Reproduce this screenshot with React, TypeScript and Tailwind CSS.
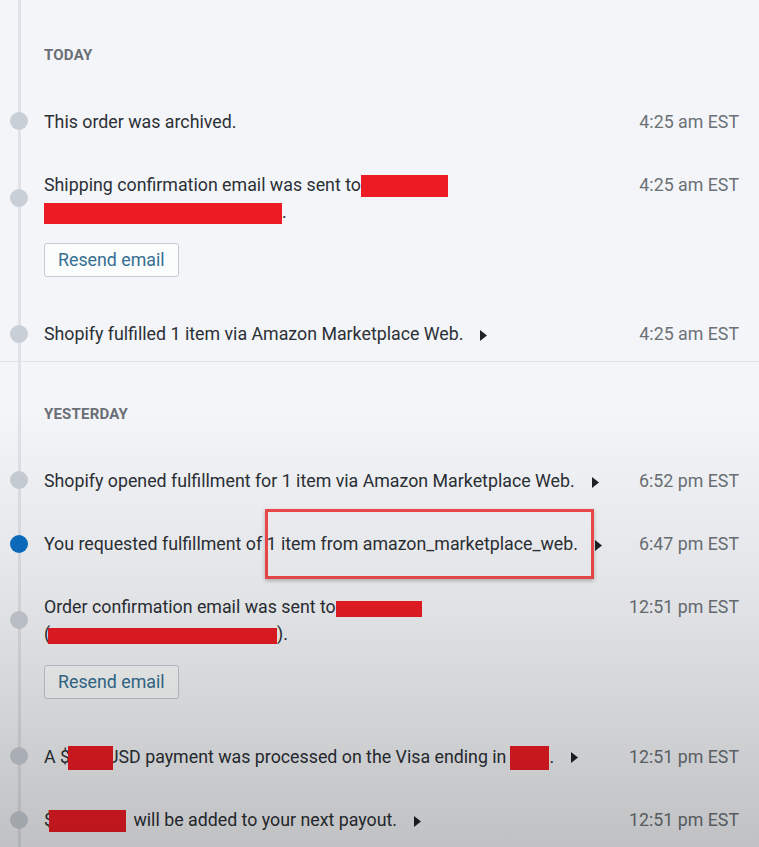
import React from "react";

type Redact = { w: number; h: number; className?: string };

const Box = ({ w, h, className = "" }: Redact) => (
  <span
    className={`relative z-[1] inline-block bg-[#ed1c24] align-middle ${className}`}
    style={{ width: w, height: h }}
  />
);

const Arrow = () => (
  <svg
    width="7"
    height="11"
    viewBox="0 0 7 11"
    className="ml-[17px] inline-block align-middle"
  >
    <path d="M0 0 L7 5.5 L0 11 Z" fill="#1d2228" />
  </svg>
);

interface EventProps {
  time: string;
  blue?: boolean;
  children: React.ReactNode;
  action?: boolean;
  last?: boolean;
}

const Event: React.FC<EventProps> = ({ time, blue, children, action, last }) => (
  <li className={`pt-[17.75px] ${last ? "pb-[13.75px]" : "pb-[18.5px]"}`}>
    <div className="flex">
      <div className="relative z-10 flex w-[44px] shrink-0 items-center">
        <span
          className={`ml-[10px] h-[18px] w-[18px] rounded-full ${
            blue ? "bg-[#0b6fc2]" : "bg-[#c9cfd6]"
          }`}
        />
      </div>
      <div className="flex-1 pr-4 text-[17.8px] leading-[27px] text-[#2b3036]">
        {children}
      </div>
      <div className="shrink-0 text-[17.8px] leading-[27px] text-[#6b7177]">
        {time}
      </div>
    </div>
    {action && (
      <div className="mb-[7px] mt-[18px] pl-[44px]">
        <button className="h-[34px] rounded-[3px] border border-[#c4cbd3] bg-[#fbfcfc] px-[13px] text-[17.8px] text-[#356f93]">
          Resend email
        </button>
      </div>
    )}
  </li>
);

const Heading = ({ label, top }: { label: string; top: string }) => (
  <h3
    className={`${top} pb-[25px] pl-[44px] text-[15px] font-bold leading-[20px] tracking-[0.2px] text-[#6a6f76]`}
  >
    {label}
  </h3>
);

export default function App() {
  return (
    <div className="relative h-[847px] w-[759px] overflow-hidden bg-[#f4f5f8] pr-[20px] font-['Roboto',sans-serif]">
      {/* timeline rail */}
      <div className="absolute left-[18px] top-0 h-full w-[3px] bg-[#dfe2e6]" />

      <section>
        <Heading label="TODAY" top="pt-[45px]" />
        <ul>
          <Event time="4:25 am EST">This order was archived.</Event>
          <Event time="4:25 am EST" action>
            Shipping confirmation email was sent to
            <Box w={87} h={22} />
            <br />
            <Box w={238} h={21} />.
          </Event>
          <Event time="4:25 am EST" last>
            Shopify fulfilled 1 item via Amazon Marketplace Web.
            <Arrow />
          </Event>
        </ul>
      </section>

      <div className="relative h-px w-[759px] bg-[#dfe2e6]" />

      <section>
        <Heading label="YESTERDAY" top="pt-[42px]" />
        <ul>
          <Event time="6:52 pm EST">
            Shopify opened fulfillment for 1 item via Amazon Marketplace Web.
            <Arrow />
          </Event>
          <Event time="6:47 pm EST" blue>
            You requested fulfillment of 1 item from amazon_marketplace_web.
            <Arrow />
          </Event>
          <Event time="12:51 pm EST" action>
            Order confirmation email was sent to
            <Box w={86} h={16} />
            <br />(
            <Box w={229} h={16} className="ml-[-2px]" />
            ).
          </Event>
          <Event time="12:51 pm EST">
            A $<Box w={45} h={24} className="ml-[-2px] mr-[-6px]" />
            USD payment was processed on the Visa ending in
            <Box w={39} h={24} className="ml-[4px]" />.
            <Arrow />
          </Event>
          <Event time="12:51 pm EST">
            $<Box w={77} h={22} className="ml-[-5px] mr-[3px]" /> will be added
            to your next payout.
            <Arrow />
          </Event>
        </ul>
      </section>

      {/* highlight annotation */}
      <div className="pointer-events-none absolute left-[265px] top-[509px] z-20 h-[70px] w-[329px] border-[3px] border-[#f24a4a] shadow-[0_2px_4px_rgba(0,0,0,0.25)]" />

      {/* screen-recording shading */}
      <div className="pointer-events-none absolute inset-0 z-30 bg-[linear-gradient(to_bottom,rgba(0,0,0,0)_0%,rgba(0,0,0,0)_48%,rgba(0,0,0,0.07)_70%,rgba(0,0,0,0.21)_100%)]" />
    </div>
  );
}
